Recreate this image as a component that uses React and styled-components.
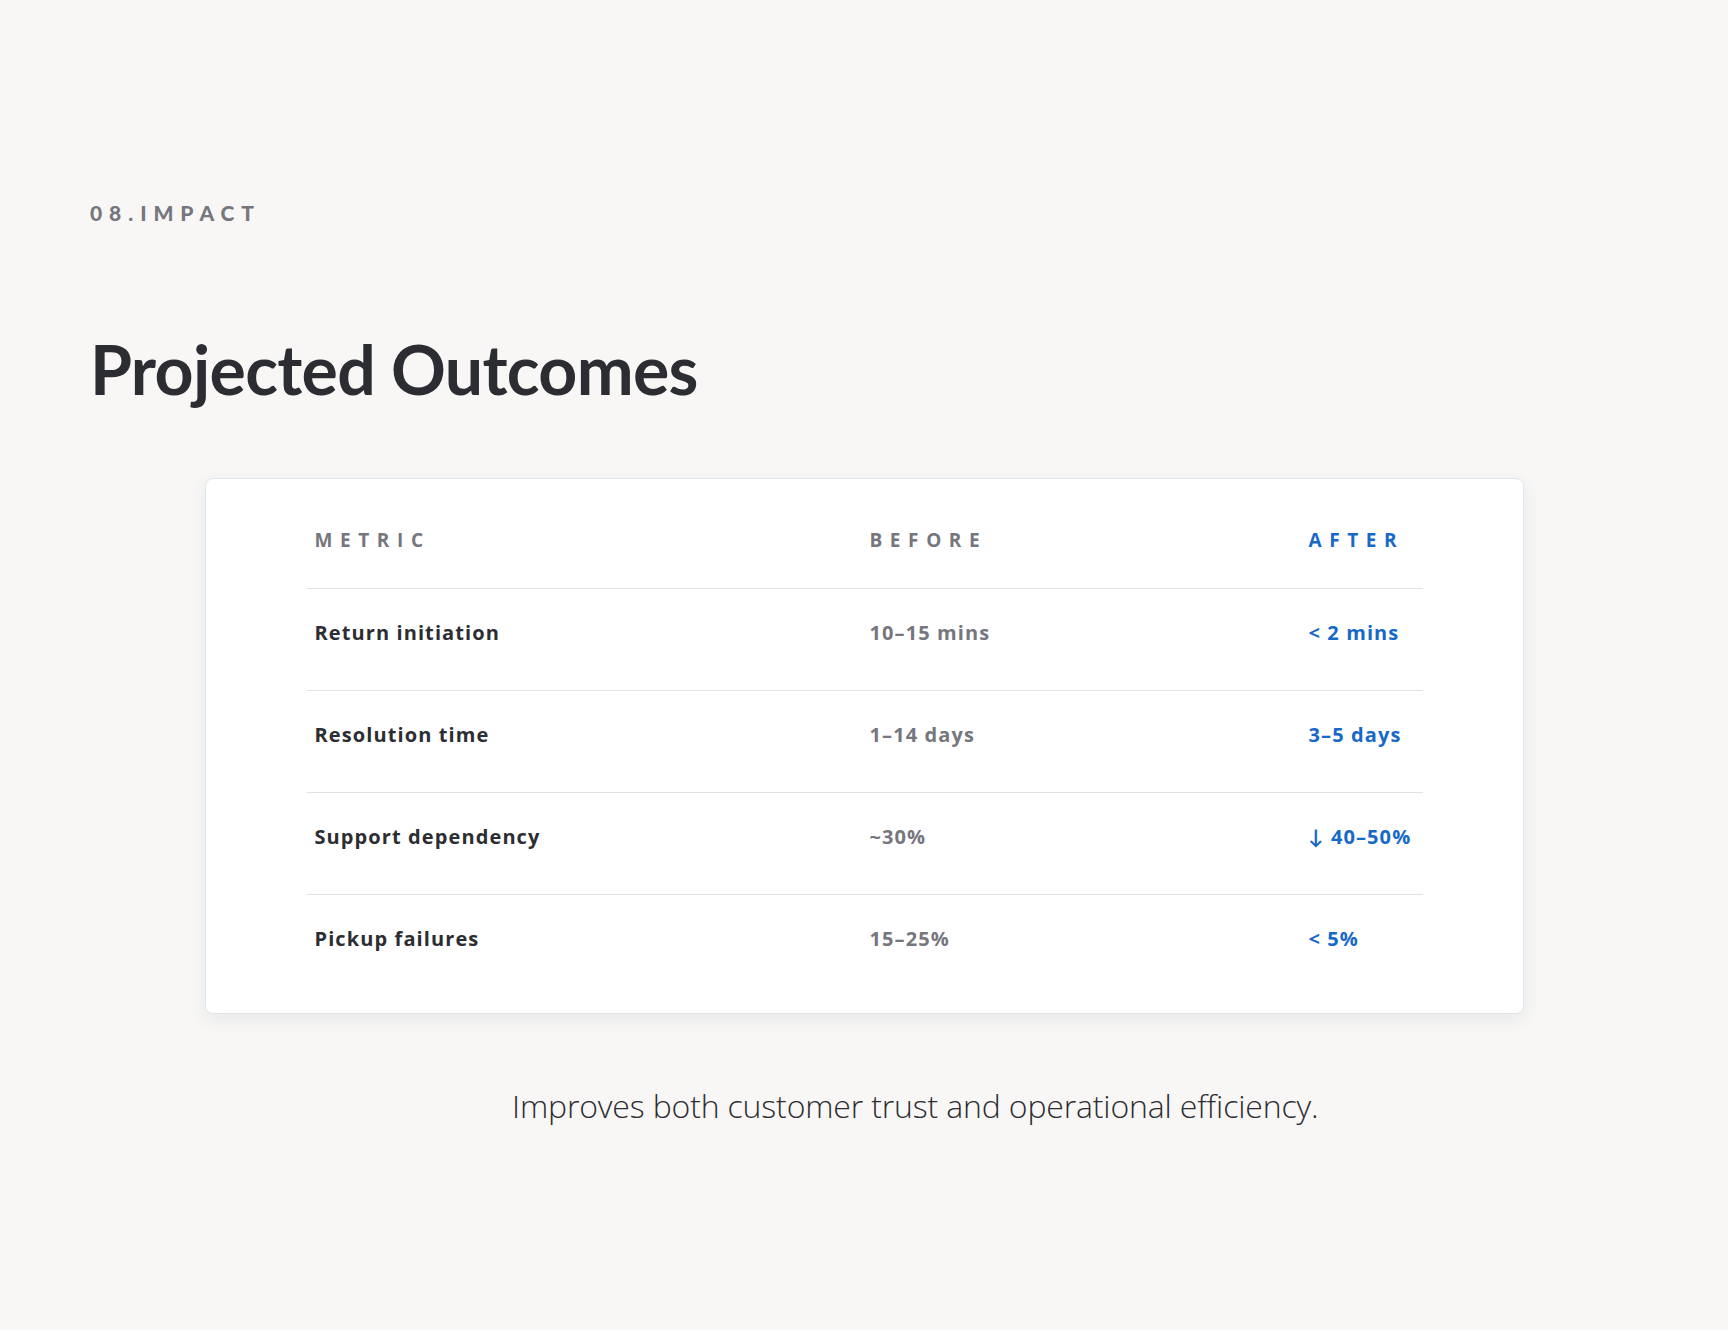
import styled, { createGlobalStyle } from 'styled-components';

const GlobalStyle = createGlobalStyle`
	body {
		margin: 0;
		background: #f8f7f5;
		font-family: 'Lato', 'Open Sans', sans-serif;
	}
`;

const Page = styled.div`
	min-height: 1330px;
	padding-top: 202px;
	box-sizing: border-box;
`;

const Header = styled.header`
	padding: 0 90px;
`;

const Eyebrow = styled.div`
	font-size: 21px;
	line-height: 21px;
	font-weight: 900;
	letter-spacing: 0.33em;
	color: #76767e;
`;

const Title = styled.h1`
	margin: 106px 0 0;
	font-size: 68px;
	line-height: 80px;
	font-weight: 700;
	letter-spacing: -0.01em;
	color: #2c2d32;
`;

const Card = styled.section`
	width: 1319px;
	margin: 69px auto 0;
	box-sizing: border-box;
	padding: 50px 101px 17px;
	background: #fff;
	border: 1px solid #e1e5ec;
	border-radius: 8px;
	box-shadow: 0 6px 18px rgba(40, 70, 120, 0.08);
`;

const Table = styled.table`
	width: 100%;
	border-collapse: collapse;
	table-layout: fixed;
	font-family: 'Open Sans', 'Lato', sans-serif;
`;

const HeadCell = styled.th`
	box-sizing: border-box;
	width: ${(p) => p.width}px;
	padding: 0 8px 37px;
	text-align: left;
	font-size: 19px;
	line-height: 22px;
	font-weight: 700;
	letter-spacing: 0.4em;
	color: ${(p) => (p.accent ? '#1769c8' : '#76767e')};
`;

const Row = styled.tr`
	border-top: 1px solid #e2e2e2;
`;

const Cell = styled.td`
	padding: 32px 8px 45px;
	font-size: 20px;
	line-height: 24px;
	font-weight: 700;
	letter-spacing: 0.055em;
	white-space: nowrap;
	color: ${(p) =>
		p.tone === 'after' ? '#1769c8' : p.tone === 'before' ? '#76767e' : '#2c2d32'};
`;

const Footer = styled.p`
	margin: 72px 0 0;
	padding-left: 512px;
	font-family: 'Open Sans', 'Lato', sans-serif;
	font-size: 32px;
	line-height: 40px;
	font-weight: 300;
	letter-spacing: -0.005em;
	color: #2c2d32;
`;

const rows = [
	{ metric: 'Return initiation', before: '10–15 mins', after: '< 2 mins' },
	{ metric: 'Resolution time', before: '1–14 days', after: '3–5 days' },
	{ metric: 'Support dependency', before: '~30%', after: '↓ 40–50%' },
	{ metric: 'Pickup failures', before: '15–25%', after: '< 5%' }
];

const App = () => (
	<>
		<GlobalStyle />
		<Page>
			<Header>
				<Eyebrow>08.IMPACT</Eyebrow>
				<Title>Projected Outcomes</Title>
			</Header>

			<Card>
				<Table>
					<thead>
						<tr>
							<HeadCell width={555}>METRIC</HeadCell>
							<HeadCell width={439}>BEFORE</HeadCell>
							<HeadCell width={122} accent>
								AFTER
							</HeadCell>
						</tr>
					</thead>
					<tbody>
						{rows.map((row) => (
							<Row key={row.metric}>
								<Cell>{row.metric}</Cell>
								<Cell tone="before">{row.before}</Cell>
								<Cell tone="after">{row.after}</Cell>
							</Row>
						))}
					</tbody>
				</Table>
			</Card>

			<Footer>Improves both customer trust and operational efficiency.</Footer>
		</Page>
	</>
);

export default App;
